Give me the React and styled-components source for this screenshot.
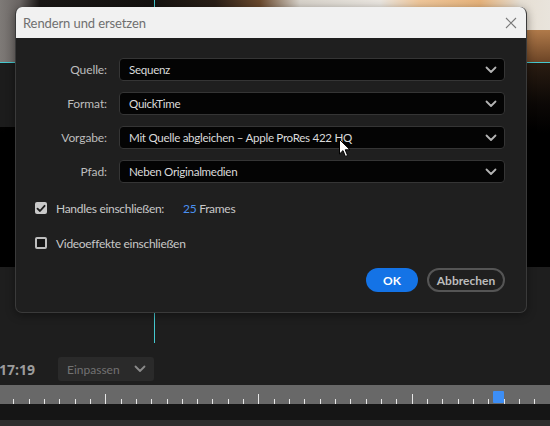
import React from "react";
import styled, { createGlobalStyle } from "styled-components";

const FONT = `"Lato", "Liberation Sans", sans-serif`;

const Global = createGlobalStyle`
  html, body { margin: 0; padding: 0; background: #1e1e1e; overflow: hidden; }
  * { box-sizing: border-box; }
`;

const Stage = styled.div`
  position: relative;
  width: 550px;
  height: 426px;
  overflow: hidden;
  font-family: ${FONT};
  background: #1e1e1e;
`;

const Backdrop = styled.div`
  display: flex;
  flex-direction: column;
  height: 100%;
`;

const Photo = styled.div`
  height: 62px;
  background: linear-gradient(90deg, #7e7a77 0px, #6a6563 20px, #1a1716 40px, #141210 150px, #2a1f17 215px, #6b4a2e 260px, #d9d4cc 300px, #ebe7e1 380px, #f0c79a 420px, #e8b47c 480px, #e6dfd4 520px, #e9e4dc 550px);
  position: relative;
  &::after {
    content: "";
    position: absolute;
    right: 0;
    top: 30px;
    width: 40px;
    height: 32px;
    background: linear-gradient(180deg, #b07a4a, #6d4526);
  }
`;

const Video = styled.div`
  height: 205px;
  border-top: 1px solid #45c8cf;
  background: linear-gradient(180deg, #2a1c12 0px, #0c0806 40px, #000 70px, #000 100%);
  position: relative;
  &::before {
    content: "";
    position: absolute;
    left: 0;
    top: 0;
    width: 16px;
    height: 64px;
    background: #1c1c1c;
  }
`;

const Panel = styled.div`
  flex: 1;
  display: flex;
  flex-direction: column;
  background: #1e1e1e;
`;

const Controls = styled.div`
  display: flex;
  align-items: center;
  gap: 23px;
  height: 24px;
  margin-top: 90px;
`;

const Timecode = styled.span`
  font-family: "Open Sans", "Liberation Sans", sans-serif;
  font-weight: 700;
  font-size: 14px;
  color: #9c9c9c;
  margin-left: -1px;
`;

const Fit = styled.div`
  width: 96px;
  height: 24px;
  border-radius: 3px;
  background: #2a2a2a;
  display: flex;
  align-items: center;
  justify-content: space-between;
  padding: 0 8px 0 9px;
  font-size: 12px;
  color: #727272;
`;

const Ruler = styled.div`
  position: relative;
  margin-top: 4px;
  height: 19px;
  background: #686868;
`;

const Tick = styled.div`
  position: absolute;
  bottom: 0;
  width: 1px;
  height: ${(p) => (p.$major ? 10 : 5)}px;
  background: #e6e6e6;
`;

const PlayheadMark = styled.div`
  position: absolute;
  left: 493px;
  top: 6px;
  width: 11px;
  height: 12px;
  background: #3d8ef5;
  border-radius: 1px;
`;

const Track = styled.div`
  height: 16px;
  background: #151515;
`;

const Floor = styled.div`
  flex: 1;
  background: #2d2d2d;
`;

const Guide = styled.div`
  position: absolute;
  left: 154px;
  top: 0;
  width: 1px;
  height: 343px;
  background: #45c8cf;
`;

const Dialog = styled.div`
  position: absolute;
  left: 15px;
  top: 7px;
  width: 512px;
  height: 306px;
  border-radius: 7px;
  overflow: hidden;
  background: #1f1f1f;
  border: 1px solid #3a3a3a;
  border-top: none;
  display: flex;
  flex-direction: column;
  box-shadow: 0 2px 10px rgba(0, 0, 0, 0.4);
`;

const TitleBar = styled.div`
  height: 31px;
  background: #f1f1f1;
  display: flex;
  align-items: center;
  justify-content: space-between;
  padding: 0 10px 0 8px;
  margin: 0 -1px;
`;

const Title = styled.span`
  font-size: 13px;
  color: #6f6f6f;
  letter-spacing: -0.1px;
`;

const Body = styled.div`
  flex: 1;
  padding: 20px 21px 20px 19px;
  display: flex;
  flex-direction: column;
`;

const Form = styled.div`
  display: grid;
  grid-template-columns: 72px 1fr;
  column-gap: 12px;
  row-gap: 11px;
  align-items: center;
`;

const Label = styled.span`
  text-align: right;
  font-size: 12px;
  color: #bdbdbd;
  letter-spacing: -0.1px;
`;

const Select = styled.div`
  height: 23px;
  background: #040404;
  border: 1px solid #353535;
  border-radius: 4px;
  display: flex;
  align-items: center;
  justify-content: space-between;
  padding: 0 7px 0 9px;
  font-size: 11.6px;
  letter-spacing: -0.3px;
  color: #dadada;
`;

const CheckRow = styled.label`
  display: flex;
  align-items: center;
  gap: 9px;
  height: 16px;
  margin-top: ${(p) => p.$mt}px;
  font-size: 12px;
  letter-spacing: -0.3px;
  color: #c8c8c8;
`;

const Box = styled.span`
  width: 12px;
  height: 12px;
  border-radius: 2px;
  display: flex;
  align-items: center;
  justify-content: center;
  background: ${(p) => (p.$checked ? "#c9c9c9" : "#141414")};
  border: ${(p) => (p.$checked ? "none" : "2px solid #bdbdbd")};
`;

const Value = styled.span`
  margin-left: 10px;
`;

const Num = styled.span`
  color: #4a90f0;
`;

const Actions = styled.div`
  margin-top: auto;
  display: flex;
  justify-content: flex-end;
  gap: 9px;
`;

const Button = styled.button`
  height: 24px;
  width: ${(p) => p.$w}px;
  border-radius: 12px;
  font-family: ${FONT};
  font-weight: 700;
  font-size: 12px;
  padding: 0;
  cursor: pointer;
  color: ${(p) => (p.$primary ? "#ffffff" : "#bcbcbc")};
  background: ${(p) => (p.$primary ? "#1473e6" : "transparent")};
  border: ${(p) => (p.$primary ? "none" : "2px solid #555555")};
`;

const Cursor = styled.svg`
  position: absolute;
  left: 339px;
  top: 139px;
`;

const Chevron = ({ color = "#b4b4b4" }) => (
  <svg width="12" height="8" viewBox="0 0 12 8">
    <polyline points="1.5,1.5 6,6 10.5,1.5" fill="none" stroke={color} strokeWidth="1.8" strokeLinecap="round" strokeLinejoin="round" />
  </svg>
);

const CloseIcon = () => (
  <svg width="12" height="12" viewBox="0 0 12 12">
    <path d="M1 1 L11 11 M11 1 L1 11" stroke="#7a7a7a" strokeWidth="1.1" fill="none" />
  </svg>
);

const Check = () => (
  <svg width="10" height="9" viewBox="0 0 10 9">
    <polyline points="1.5,4.6 4,7 8.6,1.8" fill="none" stroke="#1e1e1e" strokeWidth="1.8" strokeLinecap="round" strokeLinejoin="round" />
  </svg>
);

const fields = [
  ["Quelle:", "Sequenz"],
  ["Format:", "QuickTime"],
  ["Vorgabe:", "Mit Quelle abgleichen – Apple ProRes 422 HQ"],
  ["Pfad:", "Neben Originalmedien"],
];

const ticks = Array.from({ length: 36 }, (_, i) => i);

export default function App() {
  return (
    <Stage>
      <Global />
      <Backdrop>
        <Photo />
        <Video />
        <Panel>
          <Controls>
            <Timecode>17:19</Timecode>
            <Fit>
              Einpassen
              <Chevron color="#8a8a8a" />
            </Fit>
          </Controls>
          <Ruler>
            {ticks.map((i) => (
              <Tick key={i} $major={i % 10 === 6} style={{ left: Math.round(13.3 + i * 15.32) }} />
            ))}
            <PlayheadMark />
          </Ruler>
          <Track />
          <Floor />
        </Panel>
      </Backdrop>
      <Guide />
      <Dialog>
        <TitleBar>
          <Title>Rendern und ersetzen</Title>
          <CloseIcon />
        </TitleBar>
        <Body>
          <Form>
            {fields.map(([l, v]) => (
              <React.Fragment key={l}>
                <Label>{l}</Label>
                <Select>
                  <span>{v}</span>
                  <Chevron />
                </Select>
              </React.Fragment>
            ))}
          </Form>
          <CheckRow $mt={17}>
            <Box $checked>
              <Check />
            </Box>
            <span>Handles einschließen:</span>
            <Value>
              <Num>25</Num> Frames
            </Value>
          </CheckRow>
          <CheckRow $mt={19}>
            <Box />
            <span>Videoeffekte einschließen</span>
          </CheckRow>
          <Actions>
            <Button $primary $w={52}>OK</Button>
            <Button $w={78}>Abbrechen</Button>
          </Actions>
        </Body>
      </Dialog>
      <Cursor width="12" height="19" viewBox="0 0 12 19">
        <path d="M0.5 0.5 L0.5 15 L4 11.6 L6.4 17.4 L8.6 16.5 L6.2 10.8 L11 10.8 Z" fill="#ffffff" stroke="#000000" strokeWidth="1" strokeLinejoin="round" />
      </Cursor>
    </Stage>
  );
}
